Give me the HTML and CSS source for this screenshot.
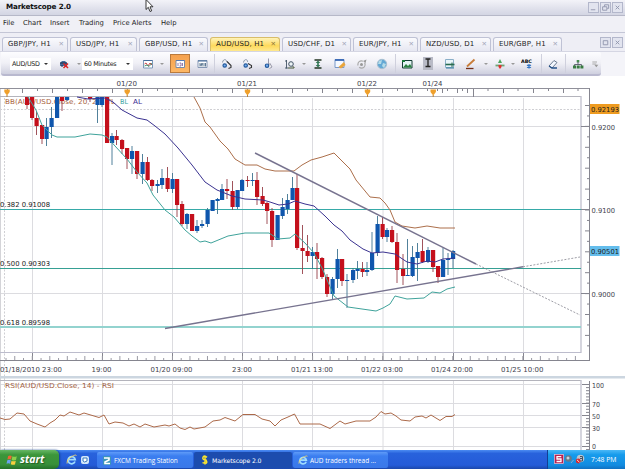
FILE: index.html
```html
<!DOCTYPE html>
<html lang="en">
<head>
    <meta charset="UTF-8">
    <title>Marketscope 2.0</title>
    <link rel="stylesheet" href="styles.css">
</head>
<body>
    <header class="titlebar">
        <h1>Marketscope 2.0</h1>
        <svg class="cursor" width="9" height="14" viewBox="0 0 9 14"><path d="M1 0.5V10.5L3.3 8.3L5 12.5L6.7 11.8L5 7.8H8Z" fill="#fff" stroke="#222" stroke-width="0.9"/></svg>
        <div class="window-buttons">
            <span><svg viewBox="0 0 10 10"><path d="M2 7.5H7"/></svg></span>
            <span><svg viewBox="0 0 10 10"><path d="M4 4V2H8.5V6H7M1.8 4.2H6.5V8H1.8Z"/></svg></span>
            <span><svg viewBox="0 0 10 10"><path d="M3 3L7 7M7 3L3 7"/></svg></span>
        </div>
    </header>
    <nav class="menu">
        <a class="m-file">File</a><a class="m-chart">Chart</a><a class="m-insert">Insert</a><a class="m-trading">Trading</a><a class="m-alerts">Price Alerts</a><a>Help</a>
    </nav>
    <div class="tabs">
        <div class="tab">GBP/JPY, H1<i>✕</i></div>
        <div class="tab">USD/JPY, H1<i>✕</i></div>
        <div class="tab">GBP/USD, H1<i>✕</i></div>
        <div class="tab active">AUD/USD, H1<i>✕</i></div>
        <div class="tab">USD/CHF, D1<i>✕</i></div>
        <div class="tab">EUR/JPY, H1<i>✕</i></div>
        <div class="tab">NZD/USD, D1<i>✕</i></div>
        <div class="tab">EUR/GBP, H1<i>✕</i></div>
        <div class="window-buttons small">
            <span><svg viewBox="0 0 10 10"><path d="M2.5 3H7.5V7.5H2.5Z"/></svg></span>
            <span><svg viewBox="0 0 10 10"><path d="M3 3L7 7M7 3L3 7"/></svg></span>
        </div>
    </div>
    <div class="toolbar-row">
        <div class="toolbar">
            <div class="combo">AUD/USD<b class="arrow"></b></div>
            <svg class="icon" viewBox="0 0 12 12"><path d="M2 5L4 3H7L9 5V8H2Z" fill="#456c9c"/><path d="M2 5H9M3 8H5" stroke="#1c2c48"/><path d="M5.5 5.5L10 10M10 5.5L5.5 10" stroke="#d22" stroke-width="1.5"/></svg>
            <b class="arrow dim"></b>
            <div class="combo wide">60 Minutes<b class="arrow"></b></div>
            <svg class="icon" viewBox="0 0 12 12"><path d="M1.5 2.5H10.5V10H1.5Z" fill="#fff" stroke="#7c98b8"/><path d="M1.5 2.5H10.5" stroke="#456c9c"/><path d="M2.5 6L4 5L6 8L8 5L10 7" fill="none" stroke="#c44"/><path d="M2.5 8L5 7L7 8.5L10 5" fill="none" stroke="#497"/></svg>
            <b class="arrow dim"></b>
            <div class="pressed"><svg class="icon" viewBox="0 0 12 12"><path d="M2 2.5H10.5V9.5H2Z" fill="#fff" stroke="#788aa8"/><path d="M2 2.5H10.5" stroke="#557bb5"/><path d="M4 5V8M5.5 5H7V8H5.5M8.5 5V8" stroke="#648" stroke-width="0.7" fill="none"/></svg></div>
            <svg class="icon" viewBox="0 0 12 12"><path d="M2 2.5H11V9.5H2Z" fill="#fff" stroke="#8497b4"/><path d="M2 3H11" stroke="#456c9c"/><path d="M4 5V8.5M4 7H6V5V8.5M8 5V8.5M9.5 5V8.5" stroke="#357" stroke-width="0.8" fill="none"/></svg>
            <b class="sep"></b>
            <svg class="icon" viewBox="0 0 12 12"><path d="M1.5 4.5C2 .5 6 1 5.5 4" stroke="#8b98a8" fill="none"/><circle cx="3.7" cy="7.5" r="1.7" fill="#78aef0" stroke="#245a9c" stroke-width="1.2"/><path d="M6 3.5L10 7.5V9.5L7.5 10.5" stroke="#333" stroke-width="1.1" fill="none"/></svg>
            <svg class="icon" viewBox="0 0 12 12"><path d="M1.5 4.5C2 .5 6 1 5.5 4" stroke="#8b98a8" fill="none"/><circle cx="3.7" cy="7.5" r="1.7" fill="#78aef0" stroke="#245a9c" stroke-width="1.2"/><path d="M6 5.5L9.5 7.5V9.5L7 10.5" stroke="#333" stroke-width="1.1" fill="none"/></svg>
            <svg class="icon" viewBox="0 0 12 12"><path d="M5.5 .5V7L7 5.5L9 9L6.5 10.5" stroke="#99a" fill="#eee"/><circle cx="4" cy="7.7" r="1.7" fill="#78aef0" stroke="#245a9c" stroke-width="1.2"/></svg>
            <svg class="icon" viewBox="0 0 12 12"><path d="M2.5 2V10.5M1 3H3M1 10H4" stroke="#456" stroke-width="0.9"/><circle cx="7" cy="6" r="2.3" fill="#edf4f6" stroke="#456"/><path d="M8.5 8L10.5 10M4 10H10" stroke="#453"/></svg>
            <b class="arrow dim"></b>
            <svg class="icon" viewBox="0 0 12 12"><path d="M2.5 2H9.5M2.5 10H9.5" stroke="#232" stroke-width="1.3"/><path d="M6 2.5L8.3 5H6.8V7H8.3L6 9.5L3.7 7H5.2V5H3.7Z" fill="#375"/></svg>
            <svg class="icon" viewBox="0 0 12 12"><path d="M1 1.5H10V9.5H1Z" fill="#f5f9ff" stroke="#7998c8"/><path d="M1 2H10" stroke="#3968b5" stroke-width="1.8"/><path d="M4.5 9L10 4L11.5 7L7 10.5Z" fill="#eaa53b"/></svg>
            <svg class="icon" viewBox="0 0 12 12"><circle cx="5.5" cy="6.5" r="3.6" fill="none" stroke="#aaa" stroke-width="1.2" stroke-dasharray="8 2"/><circle cx="5.5" cy="6.5" r="1.5" fill="#999"/><path d="M7 3L10.5 1.5L9.5 5Z" fill="#999"/></svg>
            <svg class="icon" viewBox="0 0 12 12"><circle cx="6" cy="6" r="4.7" fill="#64a9d5" stroke="#a8bfd0"/><path d="M3 3L6 2L5 6L2 6ZM7 5L10 6L8 10L6 8Z" fill="#b6dce9"/></svg>
            <b class="sep"></b>
            <svg class="icon" viewBox="0 0 12 12"><path d="M1.5 2.5H11V10H1.5Z" fill="#e4f4f4" stroke="#143c35"/><path d="M2 9.5L5 6L7 8L9 6L11 9.5Z" fill="#27813e"/><path d="M1 3H4" stroke="#197a38" stroke-width="2"/></svg>
            <div class="grey-tool"><svg class="icon" viewBox="0 0 12 12"><path d="M3.5 2H8.5M3.5 9.5H8.5M6 2V9.5" stroke="#222" stroke-width="1.3"/></svg></div>
            <svg class="icon" viewBox="0 0 12 12"><path d="M1.5 1.5H9.5V9.5H1.5Z" fill="#e9f5fa" stroke="#8aafc8"/><path d="M1.5 6.5H10.5" stroke="#286b50" stroke-width="1.6"/><path d="M8 4.5V9" stroke="#286b50"/><path d="M2 10H10" stroke="#357ba0"/></svg>
            <svg class="icon" viewBox="0 0 12 12"><path d="M2 8.5L9.5 1.5" stroke="#c87d3a" stroke-width="1.8"/><path d="M1 10.5H8.5" stroke="#732f19" stroke-width="1.3"/></svg>
            <b class="arrow dim"></b>
            <svg class="icon" viewBox="0 0 12 12"><path d="M6 1L8 5H4Z" fill="#4ba65e"/><path d="M1.5 7.5H10.5" stroke="#6ba777" stroke-width="1.8"/><path d="M4.5 7H7.5V9L6 11L4.5 9Z" fill="#e12f2f"/></svg>
            <b class="arrow dim"></b>
            <svg class="icon" viewBox="0 0 12 12"><text x="0" y="5" class="abc">ABC</text><path d="M8 6V10.5M6 7L10 9.5M10 7L6 9.5" stroke="#3576c5" stroke-width="1.3"/></svg>
            <b class="sep"></b>
            <svg class="icon" viewBox="0 0 12 12"><path d="M2 8L7 2.5L10 4.5L5 10Z" fill="#f4f8ff" stroke="#69798f"/><path d="M2 8L5 10H10" fill="none" stroke="#245189" stroke-width="1.3"/></svg>
            <b class="sep"></b>
            <svg class="icon" viewBox="0 0 12 12"><path d="M4.7 2H7.3V4.5H4.7Z" fill="#478c50"/><path d="M6 4V7M2.5 8V6.5H9.5V8" fill="none" stroke="#667"/><path d="M1 7.5H4V10.5H1ZM4.7 7.5H7.7V10.5H4.7ZM8.4 7.5H11.4V10.5H8.4Z" fill="#397c42"/></svg>
            <svg class="icon tiny" viewBox="0 0 12 12"><path d="M2 3H9M2 6H8" stroke="#aaa" stroke-width="1.5"/><path d="M5 7H11L8 11Z" fill="#999"/></svg>
        </div>
    </div>
    <main class="charts">
        <svg id="chart" width="625" height="374" viewBox="0 76 625 374"></svg>
    </main>
    <footer class="taskbar">
        <div class="start">
            <svg width="12" height="12" viewBox="0 0 12 12"><path d="M2.2 2Q4 .8 5.7 2L5 5.6Q3.2 4.6 1.4 5.6Z" fill="#ee6434"/><path d="M6.4 2.3Q8.5 3.3 10.8 2.3L10 6Q8 7 5.7 5.9Z" fill="#8bd04b"/><path d="M1.3 6.3Q3 5.3 4.8 6.3L4.1 9.8Q2.4 8.8.5 9.8Z" fill="#6ba2ee"/><path d="M5.5 6.7Q7.5 7.7 9.8 6.7L9 10.4Q7 11.2 4.8 10.2Z" fill="#f6cf40"/></svg>
            <em>start</em>
        </div>
        <div class="quick">
            <svg width="11" height="11" viewBox="0 0 11 11"><path d="M9 7.5A3.6 3.6 0 1 1 9.2 5.7H3" fill="none" stroke="#9edcff" stroke-width="1.8"/><path d="M1 9.5Q0 6 5 3T10.5 1.5" fill="none" stroke="#f0d56c" stroke-width="0.9"/></svg>
            <svg width="10" height="10" viewBox="0 0 10 10"><rect x="1" y="1" width="8" height="8" rx="2" fill="#d3e7fa"/><path d="M3 6V3H7V6L4.5 7Z" stroke="#3979bd" fill="#fff"/></svg>
        </div>
        <div class="task fxcm"><svg width="8" height="9" viewBox="0 0 8 9"><rect width="8" height="9" rx="1" fill="#3b95b8"/><path d="M1 2H6V4L2 6V7.5H7" fill="none" stroke="#fff" stroke-width="1.6"/></svg>FXCM Trading Station</div>
        <div class="task current"><svg width="8" height="10" viewBox="0 0 8 10"><path d="M6 2.4Q3-.2 2 2.3T5 5Q7 8.5 4 8.3L1.5 7.6M4 .5V9.5" fill="none" stroke="#fbe52e" stroke-width="1.5"/></svg>Marketscope 2.0</div>
        <div class="task thread"><svg width="10" height="10" viewBox="0 0 11 11"><path d="M9 7.5A3.6 3.6 0 1 1 9.2 5.7H3" fill="none" stroke="#9edcff" stroke-width="1.8"/><path d="M1 9.5Q0 6 5 3T10.5 1.5" fill="none" stroke="#f0d56c" stroke-width="0.9"/></svg>AUD traders thread ...</div>
        <div class="tray">
            <svg width="32" height="11" viewBox="0 0 32 11"><rect x="0.5" y="0.5" width="9" height="9" fill="#b9204f" stroke="#f2bfd0" stroke-width="0.7"/><path d="M7.3 2.7H3V5H7V7.5H2.5" fill="none" stroke="#fff" stroke-width="1.3"/><circle cx="14.5" cy="4.5" r="3.3" fill="#65798c"/><circle cx="14" cy="4" r="1.5" fill="#c8d5dc"/><path d="M17 9L19.5 6" stroke="#8ac"/><circle cx="26.5" cy="4.5" r="3.8" fill="#b9c6d2"/><path d="M26 2.5H28.5V7H26M26 4.5H28" stroke="#456" fill="none"/><circle cx="24.2" cy="7" r="2.4" fill="#d22b33"/><path d="M23 5.9L25.4 8.2" stroke="#fff" stroke-width="0.8"/></svg>
            <span>7:48 PM</span>
        </div>
    </footer>
    <script src="script.js"></script>
</body>
</html>
```

FILE: styles.css
```css
* {
    box-sizing: border-box;
}
body {
    margin: 0;
    width: 625px;
    height: 469px;
    overflow: hidden;
    display: flex;
    flex-direction: column;
    background: #fff;
    color: #1c1c1c;
    font-family: "DejaVu Sans", Verdana, sans-serif;
    font-size: 6.8px;
}
svg {
    display: block;
    flex: none;
}
.titlebar {
    position: relative;
    display: flex;
    justify-content: space-between;
    height: 16px;
    padding-left: 6px;
    background: linear-gradient(#f3f3f8, #dfe0eb 60%, #d3d5e3);
    border-bottom: 1px solid #b6b8c8;
}
.titlebar h1 {
    margin: 0;
    font-size: 7.2px;
    line-height: 14px;
    letter-spacing: -0.15px;
    color: #111;
}
.cursor {
    position: absolute;
    left: 145px;
    top: -1px;
}
.window-buttons {
    display: flex;
    gap: 1px;
    padding: 2px 2px 0 0;
}
.window-buttons span {
    width: 11px;
    height: 11px;
    border: 1px solid #b3b7cb;
    background: #e2e4ef;
}
.window-buttons svg {
    width: 9px;
    height: 9px;
    fill: none;
    stroke: #8e94ac;
}
.window-buttons.small {
    padding: 0 2px 0 0;
    margin-bottom: 3px;
    align-self: end;
    justify-self: end;
}
.menu {
    display: flex;
    height: 16px;
    padding-left: 3px;
    line-height: 15px;
    background: #f0f0f6;
}
.m-file { width: 20px; }
.m-chart { width: 27px; }
.m-insert { width: 29px; }
.m-trading { width: 34px; }
.m-alerts { width: 48px; }
.tabs {
    display: grid;
    grid-template-columns: 66px 67px 69px 70px 69px 65px 71px 69px 1fr;
    column-gap: 2px;
    align-items: end;
    height: 19px;
    padding: 0 0 0 2px;
    border-top: 1px solid #c4c6d6;
    background: #eeeef5;
}
.tab {
    display: flex;
    justify-content: space-between;
    height: 14px;
    padding: 0 3px 0 5px;
    font-size: 7px;
    line-height: 13px;
    letter-spacing: 0.12px;
    white-space: nowrap;
    border: 1px solid #bfc2d5;
    border-bottom: none;
    border-radius: 3px 3px 0 0;
    background: linear-gradient(#fafafd, #e6e7f1);
}
.tab i {
    font-style: normal;
    font-size: 6.5px;
    font-weight: bold;
    color: #a2a5b8;
}
.tab.active {
    border-color: #d8bd6a;
    background: linear-gradient(#fff3b8, #fdd95c 60%, #ffe98f);
}
.tab.active i {
    color: #8e7532;
}
.toolbar-row {
    height: 25px;
    padding-left: 1px;
    background: #f4f4f9;
    border-top: 1px solid #d5d6e3;
}
.toolbar {
    display: grid;
    grid-template-columns: 43px 22px 7px 56px 20px 8px 28px 16px 8px 18px 23px 20px 22px 6px 22px 22px 22px 18px 8px 16px 26px 18px 24px 6px 22px 4px 24px 4px 20px 4px 22px 12px;
    align-items: center;
    justify-items: center;
    width: 600px;
    height: 24px;
    padding: 1px 0 0 9px;
    background: linear-gradient(#fdfdff, #f0f0f6 50%, #cfd0df);
    border-bottom: 2px solid #b9b9cf;
    border-radius: 0 2px 3px 3px;
}
.combo {
    display: flex;
    align-items: center;
    justify-content: space-between;
    justify-self: start;
    width: 41px;
    height: 12px;
    padding: 0 3px 0 2px;
    background: #fff;
    font-size: 6.4px;
    letter-spacing: -0.3px;
    white-space: nowrap;
}
.combo.wide {
    width: 51px;
}
.arrow {
    border: 2px solid transparent;
    border-top-color: #333;
    border-bottom: none;
}
.arrow.dim {
    border-top-color: #999;
}
.icon {
    width: 12px;
    height: 12px;
}
.icon.tiny {
    width: 8px;
    height: 8px;
}
.pressed {
    display: flex;
    align-items: center;
    justify-content: center;
    width: 20px;
    height: 19px;
    background: linear-gradient(#f5a14e, #fdb765);
    border: 1px solid #b97a3d;
}
.grey-tool {
    padding: 0 0 1px;
    width: 10px;
    display: flex;
    justify-content: center;
    background: #b8bac6;
}
.sep {
    width: 1px;
    height: 19px;
    background: #cfd0dd;
}
.abc {
    font-size: 4.8px;
    font-weight: bold;
}
.charts {
    height: 374px;
    background: #fff;
}
.charts svg {
    overflow: visible;
}
.axis-text {
    font-size: 6.8px;
    fill: #42424e;
}
.fib-text {
    font-size: 6.8px;
    fill: #1c1c1c;
}
.crisp {
    shape-rendering: crispEdges;
}
.taskbar {
    display: flex;
    height: 19px;
    color: #fff;
    font-family: "Open Sans", Tahoma, sans-serif;
    font-size: 6.5px;
    background: linear-gradient(#4c8cf2, #2862dc 18%, #245bd8 80%, #1b47aa);
}
.start {
    display: flex;
    align-items: center;
    gap: 2px;
    width: 59px;
    padding-left: 6px;
    border-radius: 0 5px 5px 0;
    background: linear-gradient(#67b765, #3c963a 25%, #38903a 75%, #24702a);
    box-shadow: 1px 0 2px #123f8f;
}
.start em {
    font-size: 10.5px;
    font-weight: bold;
    line-height: 15px;
    text-shadow: 1px 1px 1px #235b22;
}
.quick {
    display: flex;
    align-items: center;
    gap: 3px;
    width: 38px;
    padding-left: 7px;
}
.task {
    display: flex;
    align-items: center;
    margin: 2px 1px 1px 0;
    border-radius: 2px;
    white-space: nowrap;
    background: linear-gradient(#5f9bf8, #3b7ef0 25%, #3a78e8);
}
.fxcm {
    width: 96px;
    padding-left: 6px;
    gap: 3px;
    letter-spacing: -0.05px;
}
.current {
    width: 98px;
    padding-left: 7px;
    gap: 3px;
    font-family: "DejaVu Sans", sans-serif;
    font-size: 6.2px;
    letter-spacing: -0.12px;
    background: #1c4cae;
}
.thread {
    width: 95px;
    padding-left: 5px;
    gap: 2px;
}
.tray {
    display: flex;
    align-items: center;
    gap: 5px;
    width: 78px;
    margin-left: auto;
    padding-left: 6px;
    font-size: 6.8px;
    white-space: nowrap;
    border-left: 1px solid #123f94;
    background: linear-gradient(#4bb8f6, #169bec 25%, #128be0 80%, #1170c0);
}
```

FILE: script.js
```js
// x, high, body top, body bottom, low, r = down / b = up
const candles = [
    [27, 97, 97, 105, 109, 'r'], [32, 97, 97, 118, 120, 'r'], [36.5, 111, 118, 126, 135, 'r'],
    [42, 125, 125, 139, 144, 'r'], [46.5, 118, 127, 139, 146, 'b'], [51.5, 107, 118, 127, 138, 'b'],
    [57, 97, 97, 118, 118, 'b'], [62, 97, 97, 101, 111, 'r'], [67, 97, 97, 100, 101, 'b'],
    [90, 97, 97, 99, 102, 'r'], [97.5, 97, 97, 105, 123, 'b'], [102, 97, 97, 105, 107, 'b'],
    [107, 97, 97, 143, 143, 'r'], [112, 133, 136, 143, 165, 'b'], [116.5, 130, 136, 140, 145, 'r'],
    [122, 139, 140, 149, 154, 'r'], [127, 148, 148, 159, 169, 'r'], [132, 146, 151, 159, 174, 'b'],
    [137, 151, 151, 174, 179, 'r'], [142.5, 154, 162, 174, 184, 'b'], [147.5, 157, 162, 180, 181, 'r'],
    [152, 179, 180, 186, 191, 'r'], [157.5, 180, 184, 186, 193, 'b'], [162, 169, 178, 185, 189, 'b'],
    [167.5, 167, 178, 189, 192, 'r'], [172.5, 173, 179, 189, 193, 'b'], [177, 179, 179, 205, 217, 'r'],
    [182, 201, 204, 224, 226, 'r'], [187, 213, 214, 224, 229, 'b'], [192, 214, 214, 231, 231, 'r'],
    [197, 220, 226, 231, 233, 'b'], [202, 220, 224, 226, 228, 'b'], [207.5, 208, 210, 224, 227, 'b'],
    [212.5, 200, 200, 211, 211, 'b'], [217.5, 198, 199, 201, 214, 'b'], [222, 184, 189, 200, 200, 'b'],
    [227, 179, 189, 191, 199, 'r'], [232.5, 181, 191, 207, 210, 'r'], [237.5, 190, 190, 207, 209, 'b'],
    [242, 179, 180, 191, 191, 'b'], [247.5, 176, 180, 181, 187, 'r'], [252.5, 173, 180, 181, 186, 'b'],
    [257, 172, 180, 197, 205, 'r'], [262.5, 187, 196, 204, 206, 'r'], [267, 202, 203, 211, 224, 'r'],
    [272, 208, 211, 240, 247, 'r'], [277.5, 215, 215, 240, 240, 'b'], [282.5, 198, 207, 216, 219, 'b'],
    [287.5, 194, 200, 209, 214, 'b'], [292.5, 177, 188, 200, 200, 'b'], [297, 174, 188, 248, 250, 'r'],
    [302.5, 225, 248, 251, 274, 'r'], [307.5, 235, 251, 256, 262, 'r'], [312.5, 247, 252, 256, 269, 'b'],
    [317, 243, 252, 259, 279, 'r'], [322, 257, 258, 277, 279, 'r'], [327, 274, 277, 294, 297, 'r'],
    [332.5, 277, 279, 294, 299, 'b'], [337.5, 249, 259, 279, 288, 'b'], [342, 259, 259, 281, 286, 'r'],
    [347, 274, 280, 281, 308, 'b'], [353, 268, 270, 280, 283, 'b'], [357.5, 261, 269, 271, 279, 'b'],
    [362.5, 262, 269, 272, 277, 'r'], [367, 262, 270, 272, 276, 'b'], [372, 232, 253, 270, 271, 'b'],
    [377.5, 216, 224, 253, 256, 'b'], [382.5, 217, 224, 237, 239, 'r'], [387, 228, 230, 237, 242, 'b'],
    [392, 226, 230, 242, 243, 'r'], [397, 233, 242, 270, 283, 'r'], [403, 254, 269, 276, 285, 'r'],
    [407.5, 239, 275, 276, 276, 'b'], [412.5, 246, 257, 276, 277, 'b'], [417.5, 243, 252, 258, 281, 'b'],
    [422.5, 239, 251, 262, 263, 'r'], [428, 247, 250, 262, 263, 'b'], [433, 250, 250, 267, 272, 'r'],
    [438, 266, 266, 277, 283, 'r'], [443, 248, 260, 277, 277, 'b'], [448, 253, 259, 260, 275, 'b'],
    [453, 250, 251, 259, 268, 'b']
];

const upperBand = '194,97 200,108 205,122 210,127 220,141 228,149 235,159 245,165 257,165 265,169 275,171 294,171 302,165 311,160 322,157 334,153 340,159 350,169 356,180 370,197 380,198 385,203 390,210 395,222 402,226 415,228 427,226 440,228 455,228';
const middleBand = '77,97 88,99 105,98 113,102 122,110 137,118 147,120 155,126 165,134 178,148 192,165 205,182 217,190 232,196 245,199 263,200 270,202 279,205 288,204 295,201 305,204 314,206 325,216 334,225 342,231 350,240 363,249 372,253 383,252 395,254 407,262 417,264 427,261 435,262 443,259 455,258';
const lowerBand = '28,97 36,110 42,125 52,135 57,137 75,137 90,134 102,135 107,137 115,146 127,159 137,172 147,183 153,195 165,210 174,217 185,230 192,236 200,242 205,241 211,243 228,236 245,233 269,233 278,239 290,238 295,234 305,243 314,253 322,268 334,296 348,307 362,309 376,311 383,308 390,304 395,296 407,299 424,298 432,292 440,293 447,289 455,287';
const rsi = '0,418 5,419.5 10,419 17,413 24,414 30,421 37,424 45,427 50,423 55,420 60,415 64,416 70,412 79,415 84,413 99,417.5 104,415 109,424 115,422 123,423 129,426 134,424 140,427 145,424 154,427 165,425 169,426 175,424 180,428 185,429.5 190,427 194,429 205,427 213,421 220,420 225,417.5 235,421 243,414.5 255,414.5 262,419 270,421 275,426 281,420 288,417 294.5,414 300,424 320,424 330,428.5 340,421 345,424 356,421 370,421 376,417 381,411.5 385,414 391,413 396,416 401,420 410,421 415,417 422,416 426,418 431,415 440,420.5 446,416.5 452,416.5 455,414.5';

let out = '';

function line(x1, y1, x2, y2, color, extra = '') {
    out += `<line x1="${x1}" y1="${y1}" x2="${x2}" y2="${y2}" stroke="${color}" ${extra}/>`;
}
function text(x, y, width, value, cls = 'axis-text', fill = '') {
    const style = fill ? ` style="fill:${fill}"` : '';
    out += `<text x="${x}" y="${y}" textLength="${width}" lengthAdjust="spacingAndGlyphs" class="${cls}"${style}>${value}</text>`;
}
function curve(points, color) {
    out += `<polyline points="${points}" fill="none" stroke="${color}" stroke-width="1"/>`;
}

// grid
[32.5, 102.5, 172.5, 242.5, 312.5, 383, 453.5, 523.5].forEach(x => {
    line(x, 98, x, 352, '#dcdce0');
    line(x, 381, x, 450, '#dcdce0');
    line(x, 353, x, 360, '#85858f');
});
[126.5, 293.5].forEach(y => line(0, y, 581, y, '#dcdce0'));
[384.5, 403.5, 415.5, 427.5, 446.5].forEach(y => line(0, y, 581, y, '#dcdce0'));
line(0, 109.5, 581, 109.5, '#cfcfd3', 'stroke-dasharray="2 1.5"');
line(4.5, 98, 4.5, 450, '#cfcfd3', 'stroke-dasharray="2 1.5"');
line(0.5, 89, 0.5, 450, '#d4d4d8');

// frames
line(0, 88.5, 590, 88.5, '#90909a');
line(0, 96.5, 581, 96.5, '#b4b4bc');
line(581, 96, 581, 353, '#c4c4d0', 'stroke-width="1.4"');
line(0, 352.5, 581, 352.5, '#bcbccc');
line(0, 360.5, 590, 360.5, '#85858f');
line(589.5, 88, 589.5, 361, '#85858f');
out += '<rect x="0" y="376" width="625" height="2.5" fill="#ccd6e0"/>';
line(0, 380.5, 581, 380.5, '#b4b4bc');
line(581, 380, 581, 450, '#c4c4d0', 'stroke-width="1.4"');
line(589.5, 381, 589.5, 450, '#85858f');

// ticks
for (let i = 0, x = 7.5; x < 430; i++, x += 15) line(x, 89, x, i % 2 ? 93 : 91, '#85858f');
[437.5, 442.5, 447.5, 457.5, 462.5, 467.5, 488, 503.5, 518, 533.5, 548.5, 563.5, 578].forEach((x, i) => line(x, 89, x, i % 2 ? 93 : 91, '#85858f'));
line(473.5, 89, 473.5, 97, '#85858f');
for (let x = 6, i = 0; x < 580; x += 8.76, i++) line(x, i % 2 ? 356 : 358, x, 360, '#9a9aa4');
for (let y = 105.5, i = 0; y < 352; y += 10.45, i++) line(i % 2 ? 587 : 585, y, 589, y, '#85858f');
[126.5, 209.5, 293.5].forEach(y => line(581, y, 589, y, '#85858f'));
for (let y = 384.5; y < 450; y += 3.1) line(586, y, 589, y, '#85858f');
[384.5, 403.5, 415.5, 427.5, 446.5].forEach(y => line(582, y, 590, y, '#85858f'));

// captions
text(5, 103.7, 110, 'BB(AUD/USD.Close, 20, 2) - TL', 'axis-text', '#a8623c');
text(120, 103.7, 8, 'BL', 'axis-text', '#35a3a0');
text(133, 103.7, 9, 'AL', 'axis-text', '#3a2c92');
text(5, 388, 109, 'RSI(AUD/USD.Close, 14) - RSI', 'axis-text', '#a4623f');

// fibonacci levels
out += '<rect class="crisp" x="0" y="209" width="581" height="1" fill="#36aaa8"/>';
out += '<rect class="crisp" x="0" y="268" width="581" height="1" fill="#36a094"/>';
out += '<rect class="crisp" x="0" y="326" width="581" height="2" fill="#93d3cf"/>';
text(0, 207, 50, '0.382 0.91008', 'fib-text');
text(0, 266, 50, '0.500 0.90303', 'fib-text');
text(0, 324.7, 50, '0.618 0.89598', 'fib-text');

candles.forEach(([x, high, top, bottom, low, dir]) => {
    const body = dir === 'r' ? '#c4101c' : '#0f56ad';
    const wick = dir === 'r' ? '#964048' : '#3d7390';
    line(x, high, x, low, wick, 'stroke-width="0.9"');
    out += `<rect x="${x - 2}" y="${top}" width="4.2" height="${Math.max(bottom - top, 1)}" fill="${body}"/>`;
});

curve(upperBand, '#ac6f4b');
curve(middleBand, '#3a3290');
curve(lowerBand, '#3fa39b');
curve(rsi, '#ac6a4a');

// triangle with its projections
line(255, 153, 476, 264, '#77738f', 'stroke-width="1.4"');
line(165, 328.5, 523, 266.8, '#77738f', 'stroke-width="1.4"');
line(476, 264, 580, 315, '#85858f', 'stroke-width="0.8" stroke-dasharray="2 1.5"');
line(523, 266.8, 580, 257, '#85858f', 'stroke-width="0.8" stroke-dasharray="2 1.5"');

// day markers
[7, 127.2, 247.5, 367.5, 433.2].forEach(x => {
    out += `<path d="M${x - 2.7} 89.5H${x + 2.7}V92L${x} 95.5L${x - 2.7} 92Z" fill="#efa02c"/>`;
    line(x, 95, x, 97, '#b98335');
});
text(116.5, 85.7, 20.5, '01/20');
text(237, 85.7, 20, '01/21');
text(357, 85.7, 20, '01/22');
text(422.5, 85.7, 20, '01/24');

[[0, 62, '01/18/2010 23:00'], [91.5, 20, '19:00'], [150.5, 42, '01/20 09:00'], [232, 20, '23:00'], [291, 42, '01/21 13:00'],
 [361, 42, '01/22 03:00'], [431, 42, '01/24 20:00'], [501, 42.5, '01/25 10:00']].forEach(([x, w, s]) => text(x, 371.5, w, s));

// price scale
out += '<rect x="590" y="104" width="29.5" height="10" fill="#ee9b20"/>';
out += '<rect x="590" y="246" width="29.5" height="10" fill="#64bdec"/>';
text(591, 112, 28, '0.92193', 'fib-text');
text(591, 253.7, 28, '0.90501', 'fib-text');
text(591.5, 129.7, 23.5, '0.9200');
text(591.5, 213.2, 23.5, '0.9100');
text(591.5, 297, 23.5, '0.9000');
text(592, 387.7, 12, '100');
text(592, 406.5, 8, '70');
text(592, 418.7, 8, '50');
text(592, 431, 8, '30');
text(592, 448.7, 4, '0');

document.getElementById('chart').innerHTML = out;
```
